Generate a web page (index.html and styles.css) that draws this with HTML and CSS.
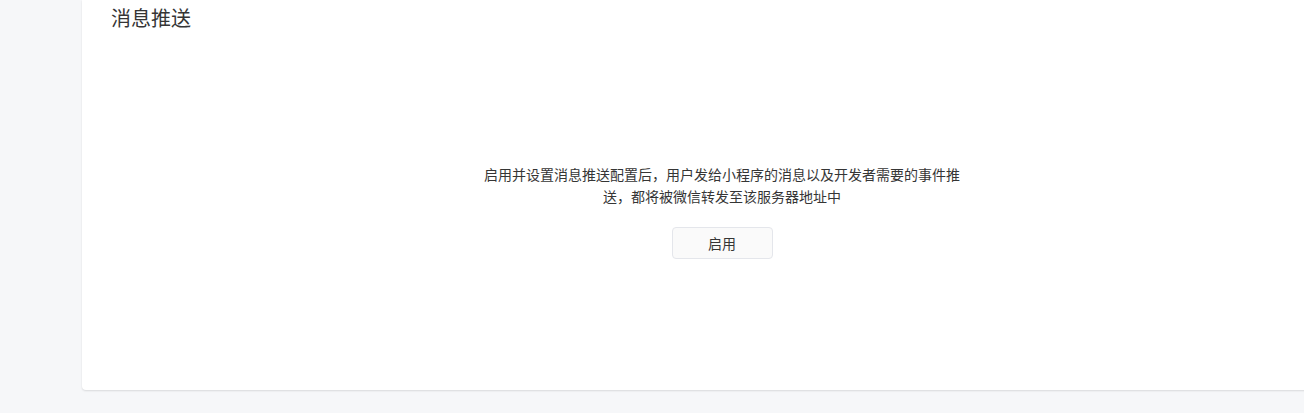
FILE: index.html
```html
<!DOCTYPE html>
<html lang="zh-CN">
  <head>
    <meta charset="UTF-8" />
    <meta name="viewport" content="width=device-width, initial-scale=1.0" />
    <title>消息推送</title>
    <link rel="stylesheet" href="styles.css">
  </head>
  <body>
    <div class="card">
      <h2 class="card-title">消息推送</h2>
      <div class="empty">
        <p class="empty-desc">启用并设置消息推送配置后，用户发给小程序的消息以及开发者需要的事件推送，都将被微信转发至该服务器地址中</p>
        <button class="btn">启用</button>
      </div>
    </div>
  </body>
</html>
```

FILE: styles.css
```css
html {
  overflow: hidden;
}

body {
  margin: 0;
  height: 413px;
  font-family: "Noto Sans CJK SC", "Noto Sans", sans-serif;
  color: #353535;
  background-color: #f6f7f9;
}

.card {
  display: flex;
  flex-direction: column;
  box-sizing: border-box;
  width: 1280px;
  height: 390px;
  margin-left: 82px;
  padding: 4px 29px 0;
  background-color: #fff;
  border-radius: 0 0 4px 4px;
  box-shadow: 0 1px 2px rgba(0, 0, 0, 0.12);
}

.card-title {
  margin: 0;
  font-size: 20px;
  font-weight: normal;
  line-height: 28px;
}

.empty {
  flex: 1;
  display: flex;
  flex-direction: column;
  align-items: center;
  justify-content: center;
}

.empty-desc {
  width: 480px;
  margin: 0 0 20px;
  font-size: 14px;
  line-height: 22px;
  text-align: center;
}

.btn {
  width: 101px;
  height: 32px;
  padding: 0;
  font-family: inherit;
  font-size: 14px;
  color: #353535;
  background-color: #fafafa;
  border: 1px solid #e4e6eb;
  border-radius: 4px;
  cursor: pointer;
}
```
